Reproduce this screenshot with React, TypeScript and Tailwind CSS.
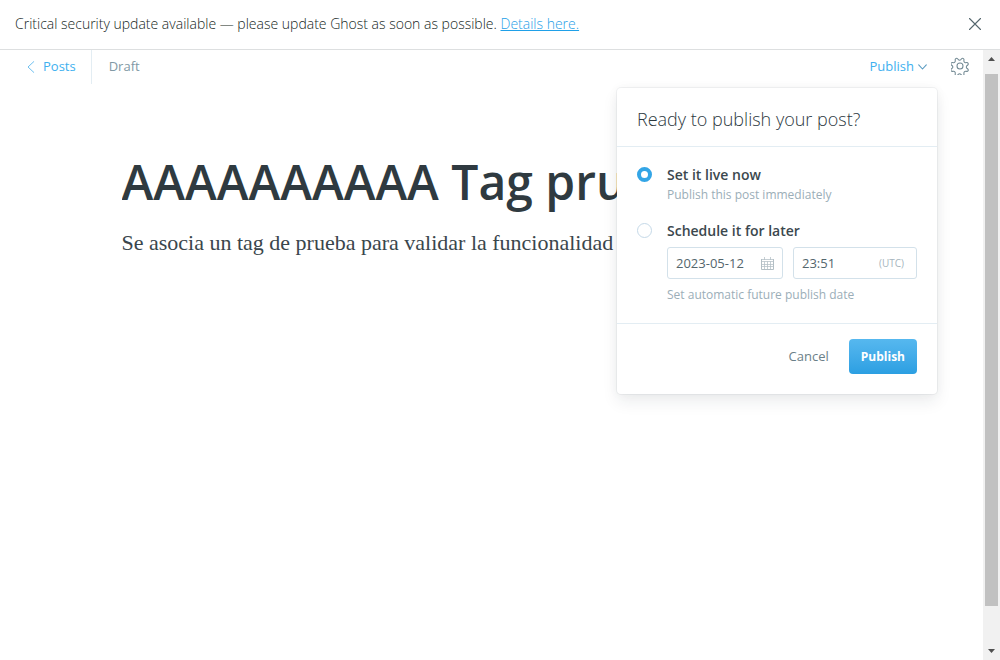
import { useState } from "react";

function CloseIcon() {
  return (
    <svg width="12" height="12" viewBox="0 0 12 12" fill="none" stroke="#54666d" strokeWidth="1.1" strokeLinecap="round" aria-hidden="true">
      <path d="M0.5 0.5 11.5 11.5M11.5 0.5 0.5 11.5" />
    </svg>
  );
}

function BackIcon() {
  return (
    <svg width="8" height="12" viewBox="0 0 8 12" fill="none" stroke="#6fc0f0" strokeWidth="1" strokeLinecap="round" strokeLinejoin="round" aria-hidden="true">
      <path d="M6.8 0.6 1 6l5.8 5.4" />
    </svg>
  );
}

function ChevronIcon() {
  return (
    <svg width="9" height="6" viewBox="0 0 9 6" fill="none" stroke="#5b9cc2" strokeWidth="1.1" strokeLinecap="round" strokeLinejoin="round" aria-hidden="true">
      <path d="M0.7 0.8 4.5 5 8.3 0.8" />
    </svg>
  );
}

function GearIcon() {
  return (
    <svg width="18" height="18" viewBox="0 0 24 24" fill="none" stroke="#738a94" strokeWidth="1.4" strokeLinecap="round" strokeLinejoin="round" aria-hidden="true">
      <circle cx="12" cy="12" r="4" />
      <path
        transform="rotate(22.5 12 12)"
        d="M13.73 2.29l.45 1.48a2.2 2.2 0 0 0 3.06 1.27l1.38-.71a1.83 1.83 0 0 1 2.46 2.46l-.71 1.38a2.2 2.2 0 0 0 1.27 3.06l1.48.46a1.83 1.83 0 0 1 0 3.48l-1.48.45a2.2 2.2 0 0 0-1.27 3.06l.71 1.38a1.83 1.83 0 0 1-2.46 2.46l-1.38-.71a2.2 2.2 0 0 0-3.06 1.27l-.46 1.48a1.83 1.83 0 0 1-3.48 0l-.45-1.48a2.2 2.2 0 0 0-3.06-1.27l-1.38.71a1.83 1.83 0 0 1-2.46-2.46l.71-1.38a2.2 2.2 0 0 0-1.27-3.06l-1.48-.46a1.83 1.83 0 0 1 0-3.48l1.48-.45a2.2 2.2 0 0 0 1.27-3.06l-.71-1.38a1.83 1.83 0 0 1 2.46-2.46l1.38.71a2.2 2.2 0 0 0 3.06-1.27l.46-1.48a1.83 1.83 0 0 1 3.48 0z"
      />
    </svg>
  );
}

function CalendarIcon() {
  return (
    <svg width="13" height="13" viewBox="0 0 13 13" fill="none" stroke="#b3bfc5" strokeWidth="1" className="shrink-0" aria-hidden="true">
      <path d="M0.5 2v10.5h12V2" />
      <path d="M0 2.5h13M0 4.5h13M1 7.5h11M1 9.5h11M3.5 4.5v8M6.5 4.5v8M9.5 4.5v8M3.5 0v3M9.5 0v3" strokeOpacity="0.75" />
    </svg>
  );
}

function Notice() {
  return (
    <aside className="flex shrink-0 items-center justify-between border-b border-[#dddfe0] px-[15px] pb-[13px] pt-3 text-sm leading-6 text-[#151f24]">
      <p className="font-light">
        Critical security update available — please update Ghost as soon as possible.{" "}
        <a href="#details" className="text-[#1fa0e8] underline">Details here.</a>
      </p>
      <button type="button" aria-label="Close" className="pr-1">
        <CloseIcon />
      </button>
    </aside>
  );
}

const radioClass =
  "mt-0.5 size-[15px] shrink-0 appearance-none rounded-full border border-[#c5d9e8] bg-white checked:border-4 checked:border-[#33a5e6]";

function PublishMenu() {
  const [mode, setMode] = useState("now");
  return (
    <form className="absolute right-0 top-full z-10 mt-1 w-80 rounded bg-white shadow-[0_0_0_1px_rgba(99,114,130,0.08),0_8px_16px_rgba(27,39,51,0.08),0_0_12px_rgba(27,39,51,0.04)]">
      <h2 className="border-b border-[#e3edf3] px-5 pb-3.5 pt-[18px] text-lg font-light leading-[26px] text-[#2c383e]">
        Ready to publish your post?
      </h2>
      <div className="flex flex-col gap-4 border-b border-[#e3edf3] px-5 py-[18px] text-sm leading-5">
        <div className="flex gap-[15px]">
          <input id="publish-now" type="radio" name="mode" className={radioClass} checked={mode === "now"} onChange={() => setMode("now")} />
          <div>
            <label htmlFor="publish-now" className="block font-semibold text-[#3b484e]">Set it live now</label>
            <p className="text-xs leading-5 text-[#9baeb8]">Publish this post immediately</p>
          </div>
        </div>
        <div className="flex gap-[15px]">
          <input id="publish-later" type="radio" name="mode" className={radioClass} checked={mode === "later"} onChange={() => setMode("later")} />
          <div className="min-w-0 flex-1">
            <label htmlFor="publish-later" className="block font-semibold text-[#3b484e]">Schedule it for later</label>
            <div className="mt-1.5 flex gap-2.5">
              <label className="flex h-8 w-[116px] items-center rounded-[3px] border border-[#d3e1ea] px-2">
                <input type="text" aria-label="Publish date" defaultValue="2023-05-12" className="w-full min-w-0 text-[13px] text-[#54666d] outline-none" />
                <CalendarIcon />
              </label>
              <label className="flex h-8 min-w-0 flex-1 items-center rounded-[3px] border border-[#d3e1ea] pl-2 pr-3">
                <input type="text" aria-label="Publish time" defaultValue="23:51" className="w-full min-w-0 text-[13px] text-[#54666d] outline-none" />
                <span className="text-[10px] text-[#a6b5bd]">(UTC)</span>
              </label>
            </div>
            <p className="mt-1.5 text-xs leading-5 text-[#9baeb8]">Set automatic future publish date</p>
          </div>
        </div>
      </div>
      <div className="flex items-center justify-end gap-5 px-5 pb-5 pt-[15px]">
        <button type="button" className="text-[13px] text-[#6b7f88]">Cancel</button>
        <button type="button" className="h-[35px] rounded bg-linear-to-b from-[#56b8ef] to-[#2b9fe2] px-3 text-xs font-bold text-white">Publish</button>
      </div>
    </form>
  );
}

function EditorHeader() {
  return (
    <header className="flex h-[34px] items-stretch text-[13px]">
      <a href="#posts" className="flex items-center gap-2 border-r border-[#e3edf3] pl-[27px] pr-[15px] text-[#3eb0ef]">
        <BackIcon />
        Posts
      </a>
      <span className="flex items-center pl-[17px] text-[#8299a5]">Draft</span>
      <div className="relative ml-auto flex items-center pr-2.5">
        <button type="button" aria-haspopup="true" aria-expanded="true" className="flex items-center gap-1 text-[#3eb0ef]">
          Publish
          <ChevronIcon />
        </button>
        <PublishMenu />
      </div>
      <button type="button" aria-label="Settings" className="flex items-center px-3.5 pb-0.5">
        <GearIcon />
      </button>
    </header>
  );
}

function ScrollTrack() {
  return (
    <div className="flex w-[17px] shrink-0 flex-col items-center bg-[#f1f1f1] py-[5px]" aria-hidden="true">
      <svg width="7" height="4" viewBox="0 0 7 4" className="my-0.5" fill="#505050"><path d="M0 4 3.5 0 7 4z" /></svg>
      <div className="mb-[43px] mt-[11px] w-[13px] flex-1 bg-[#c1c1c1]" />
      <svg width="7" height="4" viewBox="0 0 7 4" className="mb-0.5" fill="#505050"><path d="M0 0 3.5 4 7 0z" /></svg>
    </div>
  );
}

export default function App() {
  return (
    <div className="flex h-screen flex-col bg-white font-['Open_Sans','Noto_Sans',sans-serif]">
      <Notice />
      <div className="flex min-h-0 flex-1">
        <main className="min-w-0 flex-1">
          <EditorHeader />
          <article className="mx-auto max-w-[740px] pt-[65px]">
            <input
              type="text"
              aria-label="Post title"
              defaultValue="AAAAAAAAAA Tag prueba"
              className="block h-16 w-full text-5xl font-semibold text-[#2f3a40] outline-none"
            />
            <p className="mt-3.5 font-['Liberation_Serif',serif] text-[22px] leading-8 text-[#3a464c]">
              Se asocia un tag de prueba para validar la funcionalidad
            </p>
          </article>
        </main>
        <ScrollTrack />
      </div>
    </div>
  );
}
